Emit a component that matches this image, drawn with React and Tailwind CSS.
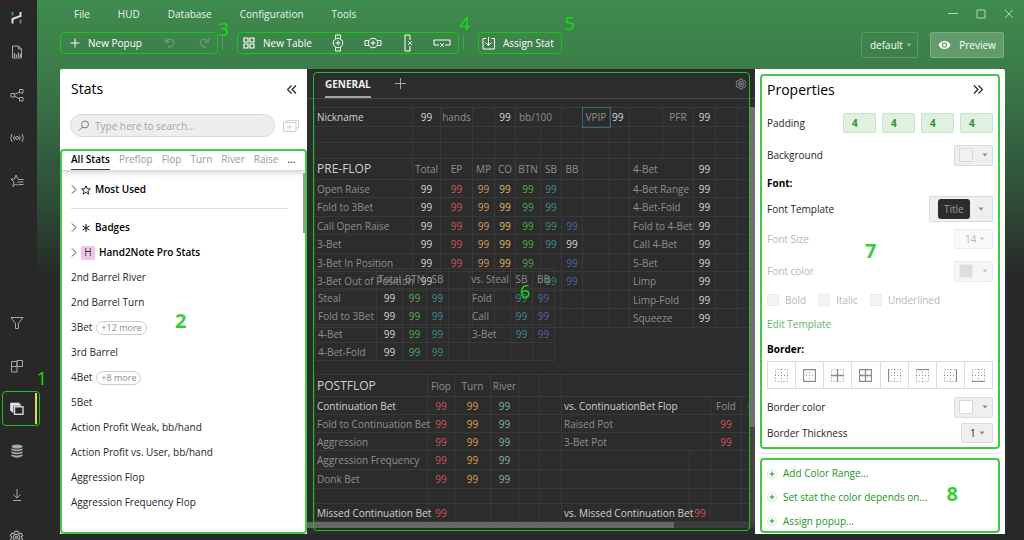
import { clsx } from "clsx";

const C = {
  w: "text-[#d6d6d6]",
  r: "text-[#cf5358]",
  o: "text-[#d69a5e]",
  y: "text-[#e0b860]",
  g: "text-[#4cae50]",
  t: "text-[#3c8c8c]",
  b: "text-[#4a62a4]",
  c: "text-[#79b5b0]",
  a: "text-[#dca04c]",
};

const preflop = [
  { name: "Open Raise", cells: "wroygt-", right: "4-Bet Range" },
  { name: "Fold to 3Bet", cells: "wroygt-", right: "4-Bet-Fold" },
  { name: "Call Open Raise", cells: "wroygtb", right: "Fold to 4-Bet" },
  { name: "3-Bet", cells: "wroygtw", right: "Call 4-Bet" },
  { name: "3-Bet In Position", cells: "wroyg-b", right: "5-Bet" },
  { name: "3-Bet Out of Position", cells: "w----tb", right: "Limp" },
  { name: "", cells: "-------", right: "Limp-Fold" },
  { name: "", cells: "-------", right: "Squeeze" },
];

const steal = [
  { name: "Steal", vs: "Fold", vals: "tb" },
  { name: "Fold to 3Bet", vs: "Call", vals: "tb" },
  { name: "4-Bet", vs: "3-Bet", vals: "tb" },
  { name: "4-Bet-Fold", vs: "", vals: "--" },
];

const statList = [
  { name: "2nd Barrel River" },
  { name: "2nd Barrel Turn" },
  { name: "3Bet", more: "+12 more" },
  { name: "3rd Barrel" },
  { name: "4Bet", more: "+8 more" },
  { name: "5Bet" },
  { name: "Action Profit Weak, bb/hand" },
  { name: "Action Profit vs. User, bb/hand" },
  { name: "Aggression Flop" },
  { name: "Aggression Frequency Flop" },
];

function Svg({ size = 16, w, h, sw = 1, className, children }) {
  const bw = w || size;
  const bh = h || size;
  return (
    <svg width={bw} height={bh} viewBox={`0 0 ${bw} ${bh}`} fill="none" stroke="currentColor" strokeWidth={sw} className={clsx("shrink-0", className)} aria-hidden="true">
      {children}
    </svg>
  );
}

function GearIcon({ size = 14, className }) {
  return (
    <svg width={size} height={size} viewBox="0 0 24 24" fill="none" stroke="currentColor" strokeWidth="1.8" className={className} aria-hidden="true">
      <path d="M9.6 2.2h4.8l.6 2.6 1.8 1 2.6-.8 2.4 4.1-2 1.8v2.2l2 1.8-2.4 4.1-2.6-.8-1.8 1-.6 2.6H9.600l-.6-2.600-1.800-1-2.600.8-2.400-4.100 2-1.800v-2.200l-2-1.800L4.600 5l2.600.8 1.800-1z" />
      <circle cx="12" cy="12" r="5" />
      <circle cx="12" cy="12" r="1.800" />
    </svg>
  );
}

function Caret({ className }) {
  return (
    <svg width="6" height="4" viewBox="0 0 6 4" className={clsx("shrink-0 pointer-events-none", className)} fill="currentColor" aria-hidden="true">
      <path d="M0.500 0.500h5L3 3.500z" />
    </svg>
  );
}

/* numbered frame drawn over a region */
function Mark({ n, frame, label }) {
  return (
    <div className={clsx("absolute z-20 pointer-events-none", frame)}>
      <span className={clsx("absolute leading-5", label)}>{n}</span>
    </div>
  );
}

const thin = "rounded-[4px] border border-[#17c617]";
const thick = "rounded-[4px] border-2 border-[#45c745]";
const thinLabel = "text-[18px] text-[#0fe00f]";
const thickLabel = "text-[20px] font-bold text-[#35cf35]";

function NavButton({ label, className, children }) {
  return (
    <button aria-label={label} className={clsx("relative flex h-[43px] w-full shrink-0 items-center justify-center pr-1 text-[#a8a8a8]", className)}>
      {children}
    </button>
  );
}

function Sidebar() {
  return (
    <nav className="z-20 flex w-[37px] shrink-0 flex-col bg-[#282828]">
      <div className="flex h-[30px] shrink-0 items-center justify-center pt-1 pr-1">
        <Svg size={13} sw={2}>
          <path d="M2.500 1v3.500M10.500 8.500v4" stroke="#3f9c45" />
          <path d="M2.500 12.500V8L10.500 5V1" stroke="#dcdcdc" />
        </Svg>
      </div>
      <NavButton label="Reports">
        <Svg w={12} h={14}>
          <path d="M1.500 1h6l3 3v9h-9zM7.500 1v3h3" />
          <path d="M3.500 12V8M5.500 12V9.500M7.500 12V7.500M9.500 12V9" strokeWidth="1.300" />
        </Svg>
      </NavButton>
      <NavButton label="Ranges">
        <Svg size={14}>
          <path d="M1 5.500h3.500v3.500H1zM9.500 1.500H13v3.500H9.500zM9.500 9.500H13V13H9.500zM4.500 6.500l5-2.500M4.500 8l5 3" />
        </Svg>
      </NavButton>
      <NavButton label="Live">
        <Svg w={14} h={12}>
          <circle cx="7" cy="6" r="1.500" />
          <path d="M4.500 3.500q-1.500 2.500 0 5M9.500 3.500q1.500 2.500 0 5M2 2q-2.500 4 0 8M12 2q2.500 4 0 8" />
        </Svg>
      </NavButton>
      <NavButton label="Favorites">
        <Svg size={14}>
          <path d="M8 5L6 1 4.500 5H.8L4 7.800 2.800 12.500 6 10l2 1.500M8 5.500h5.500M7.500 8h6M8.500 10.500h5" />
        </Svg>
      </NavButton>
      <NavButton label="Filters" className="mt-[99px]">
        <Svg size={14}>
          <path d="M1 1.500h12L8.500 7.500v5h-3v-5z" />
        </Svg>
      </NavButton>
      <NavButton label="Layouts">
        <Svg size={14}>
          <path d="M1.500 2.500h5.500v10.500H1.500zM1.500 7.500h10.500M7 1.500h5.500v6H7z" />
        </Svg>
      </NavButton>
      <NavButton label="Popups" className="text-[#e4e4e4]">
        <Svg size={14}>
          <path d="M1 9V1.500h8.500M2.500 10.500V3h8.500" strokeWidth="1.600" />
          <rect x="4.500" y="4.800" width="8.500" height="7.500" strokeWidth="1.300" />
        </Svg>
        <span className="absolute inset-y-1.5 right-0 w-0.5 bg-[#ead65c]" />
        <Mark n="1" frame={clsx("top-1 bottom-1 left-0.5 -right-[3px]", thin)} label={clsx("-top-6 -right-2", thinLabel)} />
      </NavButton>
      <NavButton label="Database">
        <svg width="12" height="15" viewBox="0 0 12 15" fill="currentColor" aria-hidden="true">
          <ellipse cx="6" cy="2.500" rx="5.500" ry="2" />
          <path d="M.5 4.200q5.500 2.600 11 0v1.800q-5.500 2.600-11 0zM.5 7.200q5.500 2.600 11 0V9q-5.500 2.600-11 0zM.5 10.200q5.500 2.600 11 0V12q-5.500 3.600-11 0z" />
        </svg>
      </NavButton>
      <NavButton label="Import">
        <Svg w={12} h={14}>
          <path d="M6 1v9M2.500 6.500L6 10l3.500-3.500M2 12.500h8" />
        </Svg>
      </NavButton>
      <NavButton label="Settings">
        <GearIcon size={15} />
      </NavButton>
    </nav>
  );
}

function TopBar() {
  const tool = "flex h-[22px] items-center text-white";
  return (
    <header className="shrink-0 text-[10px] text-[#e8f3ea]">
      <div className="flex h-7 items-center justify-between pr-2.5">
        <div className="flex items-center gap-7 pl-[37px]">
          {["File", "HUD", "Database", "Configuration", "Tools"].map((m) => (
            <button key={m}>{m}</button>
          ))}
        </div>
        <div className="flex items-center gap-[18px] text-[#b5d3ba]">
          <button aria-label="Minimize"><Svg size={10}><path d="M0 4.500h10" /></Svg></button>
          <button aria-label="Maximize"><Svg size={10}><path d="M1 1h8v8H1z" /></Svg></button>
          <button aria-label="Close"><Svg size={10}><path d="M1 1l8 8M9 1L1 9" /></Svg></button>
        </div>
      </div>
      <div className="flex h-[41px] items-start justify-between pt-1 pr-5 pl-[23px]">
        <div className="flex">
          <div className="relative flex w-[158px] items-center justify-between pr-2 pl-2.5">
            <button className={clsx(tool, "gap-2")}>
              <Svg size={10}><path d="M5 0.500v9M0.500 5h9" /></Svg>
              New Popup
            </button>
            <button aria-label="Undo" className="text-[#659f6f]">
              <Svg size={12} sw={1.3}><path d="M1.500 1v4h4M2 5q2-3.500 5.500-2.500 3 1.500 2 4.500-1.500 3.500-5.500 2.500" /></Svg>
            </button>
            <button aria-label="Redo" className="text-[#659f6f]">
              <Svg size={12} sw={1.3}><path d="M10.500 1v4h-4M10 5Q8 1.500 4.500 2.500q-3 1.500-2 4.500Q4 10.500 8 9.500" /></Svg>
            </button>
            <Mark n="3" frame={clsx("inset-0", thin)} label={clsx("-top-3.5 -right-3", thinLabel)} />
          </div>
          <span className="mx-1 my-1 w-px bg-[#5d9a67]" />
          <div className="relative ml-2.5 flex w-[222px] items-center justify-between pr-2 pl-1.5">
            <button className={clsx(tool, "gap-2")}>
              <Svg size={12} sw={1.2}><path d="M1 1h4v4H1zM7 1h4v4H7zM1 7h4v4H1zM7 7h4v4H7z" /></Svg>
              New Table
            </button>
            <button aria-label="Insert column" className="text-white">
              <Svg w={12} h={18}>
                <path d="M3.500 4.500V1h5v3.500M3.500 13.500V17h5v-3.500M6 6.500v5M3.500 9h5" />
                <circle cx="6" cy="9" r="4.800" />
              </Svg>
            </button>
            <button aria-label="Insert row" className="text-white">
              <Svg w={18} h={12}>
                <path d="M4.500 3.500H1v5h3.500M13.500 3.500H17v5h-3.500M9 3.500v5M6.500 6h5" />
                <circle cx="9" cy="6" r="4.800" />
              </Svg>
            </button>
            <button aria-label="Delete column" className="text-white">
              <Svg w={10} h={18}><path d="M7 6V1H2v16h5v-5M5 7l4 4M9 7l-4 4" /></Svg>
            </button>
            <button aria-label="Delete row" className="text-white">
              <Svg w={18} h={10}><path d="M6 7H1V2h16v5h-5M7 5l4 4M11 5L7 9" /></Svg>
            </button>
            <Mark n="4" frame={clsx("inset-0", thin)} label={clsx("-top-5 -right-3", thinLabel)} />
          </div>
          <span className="mx-1 my-1 w-px bg-[#5d9a67]" />
          <div className="relative ml-2.5 flex items-center pr-2 pl-1">
            <button className={clsx(tool, "gap-2")}>
              <Svg size={13}><path d="M4 1.500H1v10.500h11.500V1.500h-3M6.500 0v8M3.500 5.500l3 3 3-3" /></Svg>
              Assign Stat
            </button>
            <Mark n="5" frame={clsx("inset-0", thin)} label={clsx("-top-5 -right-3.5", thinLabel)} />
          </div>
        </div>
        <div className="flex gap-3">
          <div className="relative flex items-center">
            <select aria-label="Profile" className="h-[26px] w-[57px] appearance-none rounded-[2px] border border-[#5a9865] bg-transparent pl-2 text-white">
              <option>default</option>
            </select>
            <Caret className="absolute right-1.5 text-[#8fbd97]" />
          </div>
          <button className="flex h-[26px] w-[74px] items-center justify-center gap-2 rounded-[2px] border border-[#7eac86] bg-[#629b6c] text-white">
            <svg width="13" height="10" viewBox="0 0 13 10" fill="currentColor" aria-hidden="true">
              <path fillRule="evenodd" d="M6.500 1C3.500 1 1.300 3 .4 5c.9 2 3.100 4 6.100 4s5.200-2 6.100-4C11.700 3 9.500 1 6.500 1zm0 1.300a2.700 2.700 0 1 1 0 5.400 2.700 2.700 0 0 1 0-5.400z" />
              <circle cx="6.500" cy="5" r="1.500" />
            </svg>
            Preview
          </button>
        </div>
      </div>
    </header>
  );
}

function StatsPanel() {
  const group = "flex h-[25px] w-full items-center font-semibold text-black";
  const arrow = <Svg w={6} h={9} className="text-[#444]"><path d="M1 0.500l4 4-4 4" /></Svg>;
  return (
    <section className="flex w-[247px] shrink-0 flex-col rounded-tl-[2px] bg-white text-[10px] text-[#252525]">
      <div className="flex items-center justify-between pt-2 pr-2.5 pl-[11px]">
        <h2 className="text-[14px] leading-6 text-black">Stats</h2>
        <button aria-label="Collapse stats" className="text-[#222]">
          <Svg w={10} h={9} sw={1.2}><path d="M4.500 0.500l-4 4 4 4M9 0.500l-4 4 4 4" /></Svg>
        </button>
      </div>
      <div className="flex items-center pt-[13px] pr-2 pb-3 pl-2.5">
        <div className="relative flex flex-1 items-center">
          <Svg size={12} className="absolute left-2 text-[#777]">
            <circle cx="7" cy="4.500" r="3.500" /><path d="M4.500 7L1 10.500" />
          </Svg>
          <input type="text" aria-label="Search stats" placeholder="Type here to search..." className="h-[23px] w-full rounded-full border border-[#d9d9d9] bg-[#eeeeee] pl-6 outline-none placeholder:text-[#a5a5a5]" />
        </div>
        <button aria-label="Add stat" className="ml-2 text-[#cfcfcf]">
          <Svg w={16} h={12}><path d="M4 2.500V.5h11.500v7.500H13M.5 2.500H13v9H.5zM6.500 4.500v5M4 7h5" /></Svg>
        </button>
      </div>
      <div className="relative flex min-h-0 flex-1 flex-col">
        <div className="flex h-[22px] shrink-0 items-stretch gap-[9px] border-b border-[#dcdcdc] pl-[11px] whitespace-nowrap text-[#9b9b9b] shadow-md">
          <button className="border-b border-[#444] font-semibold text-black">All Stats</button>
          {["Preflop", "Flop", "Turn", "River", "Raise"].map((t) => (
            <button key={t}>{t}</button>
          ))}
          <button aria-label="More tabs" className="text-black">...</button>
        </div>
        <div className="min-h-0 flex-1 overflow-hidden px-[11px] pt-1.5">
          <div className="mr-2 mb-1.5 border-b border-[#dddddd] pb-1.5">
            <button className={group}>
              {arrow}
              <Svg size={10} className="mr-1 ml-1 text-[#222]"><path d="M5 .8l1.200 2.900 3.200.2-2.500 2 .8 3.200L5 7.400 2.300 9.100l.8-3.200-2.500-2 3.200-.2z" /></Svg>
              Most Used
            </button>
          </div>
          <button className={group}>
            {arrow}
            <Svg size={10} className="mr-1 ml-1 text-[#111]"><path d="M5 1v8M1.500 3l7 4M8.500 3l-7 4" /></Svg>
            Badges
          </button>
          <button className={group}>
            {arrow}
            <span className="mr-1 ml-1 flex size-3.5 items-center justify-center rounded-[2px] bg-[#eec9e6] font-normal text-[#432d40]">H</span>
            Hand2Note Pro Stats
          </button>
          <ul>
            {statList.map((s) => (
              <li key={s.name} className="flex h-[25px] items-center gap-1 whitespace-nowrap">
                {s.name}
                {s.more && <span className="rounded-full border border-[#cccccc] px-1 text-[9px] leading-3 text-[#8c8c8c]">{s.more}</span>}
              </li>
            ))}
          </ul>
        </div>
        <span className="absolute top-6 right-0 h-[60px] w-1 bg-[#9a9a9a]" />
        <Mark n="2" frame={clsx("inset-0", thick)} label={clsx("top-[160px] left-[113px]", thickLabel)} />
      </div>
    </section>
  );
}

function Val({ k, className }) {
  return <td className={clsx("text-center", C[k], className)}>{k === "-" ? "" : "99"}</td>;
}

function Cols({ widths }) {
  return (
    <colgroup>
      {widths.map((w, i) => <col key={i} style={w ? { width: w } : undefined} />)}
    </colgroup>
  );
}

const grid = "table-fixed border-collapse whitespace-nowrap text-left leading-[14px] [&_td]:border [&_td]:border-[#393939] [&_td]:p-0 [&_th]:border [&_th]:border-[#393939] [&_th]:p-0 [&_th]:font-normal";

function PreflopTable() {
  return (
    <table className={clsx("w-full border-y border-[#484848]", grid)}>
      <Cols widths={[98, 28, 32, 22, 21, 25, 21, 21, 27, 20, 33, 31, 22, 22, null]} />
      <tbody>
        <tr className="h-[19px]">
          <th className="text-[#d0d0d0]"><span className="pl-0.5">Nickname</span></th>
          <Val k="w" />
          <td className="text-center">hands</td>
          <td />
          <Val k="w" />
          <td colSpan={2}><span className="pl-[3px]">bb/100</span></td>
          <td />
          <td className="text-center outline outline-[#2f6b7d]">VPIP</td>
          <td className={C.w}><span className="pl-0.5">99</span></td>
          <td /><td className="text-center">PFR</td>
          <Val k="w" />
          <td /><td />
        </tr>
        {[0, 1].map((i) => (
          <tr key={i} className="h-4">
            {Array.from({ length: 15 }, (_, c) => <td key={c} />)}
          </tr>
        ))}
        <tr className="h-[21px]">
          <th className="text-[12px] text-[#d0d0d0]"><span className="pl-0.5">PRE-FLOP</span></th>
          {["Total", "EP", "MP", "CO", "BTN", "SB", "BB"].map((h) => <td key={h} className="text-center">{h}</td>)}
          <td /><td />
          <td colSpan={2}><span className="pl-[3px]">4-Bet</span></td>
          <Val k="w" />
          <td /><td />
        </tr>
      </tbody>
      <tbody>
        {preflop.map((row) => (
          <tr key={row.right} className="h-[18px] even:h-[19px]">
            <th><span className="pl-0.5">{row.name}</span></th>
            {row.cells.split("").map((k, i) => <Val key={i} k={k} />)}
            <td /><td />
            <td colSpan={2}><span className="pl-[3px]">{row.right}</span></td>
            <Val k="w" />
            <td /><td />
          </tr>
        ))}
      </tbody>
    </table>
  );
}

function StealTable() {
  return (
    <table className={clsx("absolute top-[161px] left-px w-[239px] border border-[#484848]", grid)}>
      <Cols widths={[61, 26, 24, 22, 21, 41, 22, 22]} />
      <thead>
        <tr className="h-5">
          <th />
          <th className="text-center!">Total</th>
          <th className="text-center!">BTN</th>
          <th className="text-center!">SB</th>
          <th />
          <th className="text-center!">vs. Steal</th>
          <th className="text-center!">SB</th>
          <th className="text-center!">BB</th>
        </tr>
      </thead>
      <tbody>
        {steal.map((row) => (
          <tr key={row.name} className="h-[18px]">
            <th><span className="pl-0.5">{row.name}</span></th>
            <Val k="w" /><Val k="g" /><Val k="t" />
            <td />
            <td><span className="pl-0.5">{row.vs}</span></td>
            <Val k={row.vals[0]} /><Val k={row.vals[1]} />
          </tr>
        ))}
      </tbody>
    </table>
  );
}

function PostflopTable() {
  const name = (t, hi) => <th className={hi ? "text-[#d0d0d0]" : ""}><span className="pl-0.5">{t}</span></th>;
  const vals = <><Val k="r" /><Val k="a" /><Val k="c" /><td /><td /></>;
  return (
    <table className={clsx("w-[457px] border-t border-[#484848]", grid)}>
      <Cols widths={[113, 27, 36, 28, 21, 22, 128, 21, 31, 30]} />
      <tbody>
        <tr className="h-[22px]">
          <th className="text-[12px] text-[#d0d0d0]"><span className="pl-0.5">POSTFLOP</span></th>
          <td className="text-center">Flop</td>
          <td className="text-center">Turn</td>
          <td className="text-center">River</td>
          <td /><td />
          <td colSpan={4} />
        </tr>
        <tr className="h-[18px]">
          {name("Continuation Bet", true)}{vals}
          <td colSpan={2} className="text-[#d0d0d0]"><span className="pl-0.5">vs. ContinuationBet Flop</span></td>
          <td className="text-center">Fold</td>
          <td className="text-center">Call</td>
        </tr>
        {[["Fold to Continuation Bet", "Raised Pot"], ["Aggression", "3-Bet Pot"]].map(([l, r]) => (
          <tr key={l} className="h-[18px]">
            {name(l)}{vals}
            <td colSpan={2}><span className="pl-0.5">{r}</span></td>
            <Val k="r" /><td />
          </tr>
        ))}
        {["Aggression Frequency", "Donk Bet"].map((l) => (
          <tr key={l} className="h-[19px]">
            {name(l)}{vals}
            <td /><td /><td /><td />
          </tr>
        ))}
        <tr className="h-[15px]">
          <td /><td /><td /><td /><td /><td /><td /><td /><td /><td />
        </tr>
        <tr className="h-[18px]">
          {name("Missed Continuation Bet", true)}
          <Val k="r" /><td /><td /><td /><td />
          <td className="text-[#d0d0d0]"><span className="pl-0.5">vs. Missed Continuation Bet</span></td>
          <Val k="r" /><td /><td />
        </tr>
      </tbody>
    </table>
  );
}

function Editor() {
  return (
    <section className="relative flex min-w-0 flex-1 flex-col bg-[#2c2c2c] text-[10px] text-[#8e8e8e]">
      <div className="flex h-[30px] shrink-0 items-stretch border-b border-[#484848] pr-2 pl-[18px]">
        <button className="border-b-2 border-[#a5a5a5] pt-1 font-bold text-[#f0f0f0]">GENERAL</button>
        <button aria-label="Add tab" className="ml-6 text-[#a5a5a5]">
          <Svg size={11}><path d="M5.500 0v11M0 5.500h11" /></Svg>
        </button>
        <button aria-label="Popup settings" className="ml-auto text-[#929292]"><GearIcon size={12} /></button>
      </div>
      <div className="flex min-h-0 flex-1 pt-2">
        <div className="relative ml-[7px] min-w-0 flex-1 overflow-hidden">
          <PreflopTable />
          <StealTable />
          <div className="h-[46px]" />
          <PostflopTable />
        </div>
        <div className="w-[5px] shrink-0 bg-[#444444]">
          <div className="h-[320px] bg-[#707070]" />
        </div>
      </div>
      <div className="mb-1.5 h-1.5 shrink-0 bg-[#3c3c3c]">
        <div className="h-full w-[82%] bg-[#676767]" />
      </div>
      <Mark n="6" frame={clsx("top-[3px] right-[5px] bottom-[3px] left-1.5", thin)} label={clsx("top-[208px] left-[206px]", thinLabel)} />
    </section>
  );
}

const box = "flex items-center justify-between rounded-[2px] border border-[#dadada] bg-[#efefef] px-1";

function ColorButton({ label, swatch, disabled }) {
  return (
    <button aria-label={label} disabled={disabled} className={clsx(box, "h-[21px] w-[39px] disabled:opacity-50")}>
      <span className={clsx("size-3.5 rounded-[1px] border border-[#d8d8d8]", swatch)} />
      <Caret className="text-[#8a8a8a]" />
    </button>
  );
}

/* solid lines drawn over the dotted 2x2 grid of each button */
const borderIcons = [
  { name: "No border", d: "" },
  { name: "Outer border", d: "M.5 .5h12v12H.5z" },
  { name: "Inner border", d: "M6.500 0v13M0 6.500h13" },
  { name: "All borders", d: "M.5 .5h12v12H.5zM6.500 0v13M0 6.500h13" },
  { name: "Left border", d: "M.5 0v13" },
  { name: "Top border", d: "M0 .5h13" },
  { name: "Right border", d: "M12.500 0v13" },
  { name: "Bottom border", d: "M0 12.500h13" },
];

function PropertiesPanel() {
  const row = "flex items-center justify-between";
  return (
    <aside className="flex w-[250px] shrink-0 flex-col rounded-tr-[2px] bg-white px-1.5 pt-[5px] pb-px text-[10px] text-[#252525]">
      <div className="relative flex h-[375px] shrink-0 flex-col pr-[6px] pl-1.5">
        <div className="flex h-[30px] items-center justify-between pr-2.5">
          <h2 className="text-[14px] text-black">Properties</h2>
          <button aria-label="Collapse properties" className="text-[#222]">
            <Svg w={10} h={9} sw={1.2}><path d="M1 0.500l4 4-4 4M5.500 0.500l4 4-4 4" /></Svg>
          </button>
        </div>
        <div className={clsx(row, "h-[38px]")}>
          <span>Padding</span>
          <div className="flex gap-1.5">
            {["left", "top", "right", "bottom"].map((s) => (
              <input key={s} type="text" aria-label={`Padding ${s}`} defaultValue="4" className="h-5 w-[33px] rounded-[2px] border border-[#cddfcd] bg-[#dff1df] pl-2 font-bold text-[#279427]" />
            ))}
          </div>
        </div>
        <div className={clsx(row, "h-[26px]")}>
          <span>Background</span>
          <ColorButton label="Background" swatch="bg-[#f1f1f1]" />
        </div>
        <h3 className="flex h-[31px] items-center font-bold text-black">Font:</h3>
        <div className={clsx(row, "h-5")}>
          <label htmlFor="template">Font Template</label>
          <div className={clsx(box, "relative h-[26px] w-16 pl-2")}>
            <select id="template" className="h-5 w-8 appearance-none rounded-[3px] bg-[#2c2c2c] pl-1.5 text-[#9b9b9b]">
              <option>Title</option>
            </select>
            <Caret className="mr-1 text-[#8a8a8a]" />
          </div>
        </div>
        <div className={clsx(row, "mt-2 h-6 text-[#b8b8b8]")}>
          <label htmlFor="size">Font Size</label>
          <div className="relative flex items-center">
            <select id="size" disabled className="h-5 w-[39px] appearance-none rounded-[2px] border border-[#eeeeee] bg-[#f9f9f9] pl-2.5">
              <option>14</option>
            </select>
            <Caret className="absolute right-2 text-[#cccccc]" />
          </div>
        </div>
        <div className={clsx(row, "mt-1.5 h-7 text-[#b8b8b8]")}>
          <span>Font color</span>
          <ColorButton label="Font color" swatch="bg-[#bdbdbd]" disabled />
        </div>
        <div className="flex h-[30px] items-center gap-3 text-[#b8b8b8]">
          {["Bold", "Italic", "Underlined"].map((t) => (
            <label key={t} className="flex items-center gap-1.5">
              <input type="checkbox" disabled className="size-3 appearance-none rounded-[1px] border border-[#ececec] bg-[#f4f4f4]" />
              {t}
            </label>
          ))}
        </div>
        <a href="#template" className="flex h-[18px] items-center text-[#5fb85f]">Edit Template</a>
        <h3 className="flex h-7 items-center pt-1 font-bold text-black">Border:</h3>
        <div className="flex h-7 shrink-0 divide-x divide-[#dddddd] border border-[#dddddd]">
          {borderIcons.map((b) => (
            <button key={b.name} aria-label={b.name} className="flex flex-1 items-center justify-center text-[#8a8a8a]">
              <Svg size={13}>
                <path d="M.5 .5h12v12H.5zM6.500 0v13M0 6.500h13" strokeDasharray="1 2" />
                <path d={b.d} strokeWidth="1.300" />
              </Svg>
            </button>
          ))}
        </div>
        <div className={clsx(row, "mt-1 h-7")}>
          <span>Border color</span>
          <ColorButton label="Border color" swatch="bg-white" />
        </div>
        <div className={clsx(row, "h-6")}>
          <label htmlFor="thickness">Border Thickness</label>
          <div className="relative flex items-center">
            <select id="thickness" className="h-5 w-8 appearance-none rounded-[2px] border border-[#dadada] bg-[#efefef] pl-2">
              <option>1</option>
            </select>
            <Caret className="absolute right-2 text-[#8a8a8a]" />
          </div>
        </div>
        <Mark n="7" frame={clsx("-inset-x-px inset-y-0", thick)} label={clsx("top-[165px] left-[103px]", thickLabel)} />
      </div>
      <div className="my-1 border-b border-[#e6e6e6]" />
      <div className="relative flex flex-1 flex-col justify-around pt-1 pl-1.5 text-[#249524]">
        {["Add Color Range...", "Set stat the color depends on...", "Assign popup..."].map((t) => (
          <button key={t} className="flex items-center gap-1.5">
            <Svg size={10}>
              <circle cx="5" cy="5" r="4.500" stroke="#d5e8d5" />
              <path d="M5 2.500v5M2.500 5h5" />
            </Svg>
            {t}
          </button>
        ))}
        <Mark n="8" frame={clsx("-inset-x-px inset-y-0", thick)} label={clsx("top-6 right-10", thickLabel)} />
      </div>
    </aside>
  );
}

export default function App() {
  return (
    <div className="flex h-screen overflow-hidden bg-[#282828] font-['Open_Sans','Noto_Sans',sans-serif]">
      <Sidebar />
      <div className="flex min-w-0 flex-1 flex-col bg-[linear-gradient(180deg,#3f8b4e_0px,#3c7d49_68px,#345f40_150px,#2d4a35_205px,#282828_280px)]">
        <TopBar />
        <main className="flex min-h-0 flex-1 pr-[19px] pb-1.5 pl-[23px]">
          <StatsPanel />
          <Editor />
          <PropertiesPanel />
        </main>
      </div>
    </div>
  );
}
